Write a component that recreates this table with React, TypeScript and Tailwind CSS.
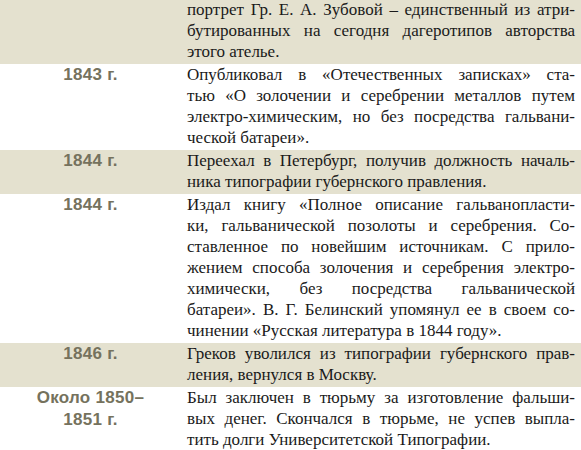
import React from "react";

type Row = { date: string[]; lines: string[]; shaded: boolean };

const rows: Row[] = [
  {
    date: [],
    shaded: true,
    lines: [
      "портрет Гр. Е. А. Зубовой – единственный из атри-",
      "бутированных на сегодня дагеротипов авторства",
      "этого ателье.",
    ],
  },
  {
    date: ["1843 г."],
    shaded: false,
    lines: [
      "Опубликовал в «Отечественных записках» ста-",
      "тью «О золочении и серебрении металлов путем",
      "электро-химическим, но без посредства гальвани-",
      "ческой батареи».",
    ],
  },
  {
    date: ["1844 г."],
    shaded: true,
    lines: [
      "Переехал в Петербург, получив должность началь-",
      "ника типографии губернского правления.",
    ],
  },
  {
    date: ["1844 г."],
    shaded: false,
    lines: [
      "Издал книгу «Полное описание гальванопласти-",
      "ки, гальванической позолоты и серебрения. Со-",
      "ставленное по новейшим источникам. С прило-",
      "жением способа золочения и серебрения электро-",
      "химически, без посредства гальванической",
      "батареи». В. Г. Белинский упомянул ее в своем со-",
      "чинении «Русская литература в 1844 году».",
    ],
  },
  {
    date: ["1846 г."],
    shaded: true,
    lines: [
      "Греков уволился из типографии губернского прав-",
      "ления, вернулся в Москву.",
    ],
  },
  {
    date: ["Около 1850–", "1851 г."],
    shaded: false,
    lines: [
      "Был заключен в тюрьму за изготовление фальши-",
      "вых денег. Скончался в тюрьме, не успев выпла-",
      "тить долги Университетской Типографии.",
    ],
  },
];

export default function App() {
  return (
    <div className="w-[581px] h-[450px] overflow-hidden bg-white">
      <div className="flex flex-col -mt-[1px]">
        {rows.map((r, i) => (
          <div
            key={i}
            className={`flex pb-[2px] ${r.shaded ? "bg-[#e4e1cf]" : "bg-white"}`}
          >
            <div className="w-[181px] shrink-0 text-center font-['Liberation_Sans',Arial,sans-serif] font-bold text-[17px] tracking-[0.3px] leading-[22px] text-[#75725d]">
              {r.date.map((d, j) => (
                <div key={j}>{d}</div>
              ))}
            </div>
            <div className="flex-1 pl-[6px] pr-[6px] font-['Liberation_Serif','Times_New_Roman',serif] text-[17px] leading-[21px] text-[#1a1a1a]">
              {r.lines.map((l, j) => (
                <div
                  key={j}
                  className={
                    j < r.lines.length - 1
                      ? "text-justify [text-align-last:justify]"
                      : "text-left"
                  }
                >
                  {l}
                </div>
              ))}
            </div>
          </div>
        ))}
      </div>
    </div>
  );
}
